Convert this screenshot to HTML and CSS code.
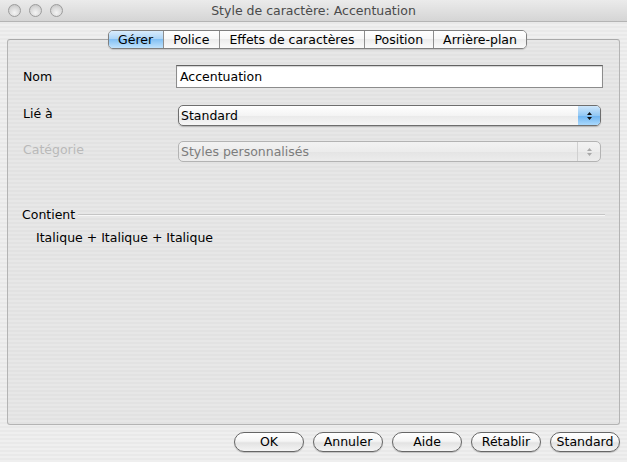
FILE: index.html
```html
<html>
<head>
  <title>Style de caractère: Accentuation</title>
  <meta charset="UTF-8">
  <link rel="stylesheet" href="styles.css">
</head>
<body>
<div class="window">
  <div class="titlebar">
    <div class="lights">
      <span class="light"></span>
      <span class="light"></span>
      <span class="light"></span>
    </div>
    <div class="title">Style de caractère: Accentuation</div>
    <div></div>
  </div>

  <div class="content">
    <div class="tabview">
      <div class="tabs">
        <span class="tab active">Gérer</span>
        <span class="tab">Police</span>
        <span class="tab">Effets de caractères</span>
        <span class="tab">Position</span>
        <span class="tab">Arrière-plan</span>
      </div>
      <div class="panel">
        <div class="row row-name">
          <div class="label">Nom</div>
          <div class="textfield">Accentuation</div>
        </div>
        <div class="row row-link">
          <div class="label label-up">Lié à</div>
          <div class="popup">
            <span class="popup-text">Standard</span>
            <span class="popup-arrows">
              <svg width="9" height="12" viewBox="0 0 9 12"><path d="M4.5 2 L7 5 L2 5 Z M2 7 L7 7 L4.5 10 Z" fill="#111"/></svg>
            </span>
          </div>
        </div>
        <div class="row row-cat">
          <div class="label label-up disabled">Catégorie</div>
          <div class="popup popup-disabled">
            <span class="popup-text">Styles personnalisés</span>
            <span class="popup-arrows">
              <svg width="9" height="12" viewBox="0 0 9 12"><path d="M4.5 2 L7 5 L2 5 Z M2 7 L7 7 L4.5 10 Z" fill="#a8a8a8"/></svg>
            </span>
          </div>
        </div>

        <div class="group-head">
          <span>Contient</span>
          <span class="group-line"></span>
        </div>
        <div class="group-text">Italique + Italique + Italique</div>
      </div>
    </div>

    <div class="buttons">
      <span class="button">OK</span>
      <span class="button">Annuler</span>
      <span class="button">Aide</span>
      <span class="button">Rétablir</span>
      <span class="button">Standard</span>
    </div>
  </div>
</div>
</body>
</html>
```

FILE: styles.css
```css
body{
  margin: 0;
  font-family: "DejaVu Sans", sans-serif;
  font-size: 12.5px;
  color: #000;
}
.window{
  width: 627px;
  height: 462px;
  display: flex;
  flex-direction: column;
  overflow: hidden;
  background: repeating-linear-gradient(#efefef 0 2px, #e9e9e9 2px 4px);
}

/* title bar */
.titlebar{
  height: 21px;
  border-bottom: 1px solid #b4b4b4;
  background: linear-gradient(#ebebeb, #d5d5d5);
  display: grid;
  grid-template-columns: 1fr auto 1fr;
  align-items: center;
}
.lights{
  display: flex;
  gap: 8px;
  padding-left: 8px;
}
.light{
  width: 13px;
  height: 13px;
  box-sizing: border-box;
  border-radius: 50%;
  border: 1px solid #9c9c9c;
  background: radial-gradient(circle at 50% 70%, #f4f4f4 0, #d9d9d9 55%, #bdbdbd 100%);
}
.title{
  color: #4a4a4a;
}

/* content */
.content{
  flex: 1;
  display: flex;
  flex-direction: column;
  padding: 8px 7px 10px 7px;
}
.tabview{
  display: flex;
  flex-direction: column;
}
.tabs{
  align-self: center;
  margin-left: 8px;
  margin-bottom: -10px;
  position: relative;
  z-index: 1;
  display: flex;
  border: 1px solid #7f7f7f;
  border-radius: 5px;
  overflow: hidden;
  box-shadow: 0 1px 1px rgba(0,0,0,.15);
}
.tab{
  padding: 0 9.5px;
  line-height: 17px;
  border-left: 1px solid #8e8e8e;
  background: linear-gradient(#ffffff 0, #f7f7f7 50%, #ececec 50%, #fafafa 100%);
}
.tab:first-child{
  border-left: 0;
}
.tab.active{
  background: linear-gradient(#d9ecfc 0, #a9d3f7 50%, #84c1f4 50%, #c0e3fd 100%);
}
.panel{
  height: 386px;
  box-sizing: border-box;
  border: 1px solid #b4b4b4;
  border-top-color: #a9a9a9;
  border-radius: 3px;
  background: repeating-linear-gradient(#e7e7e7 0 2px, #e2e2e2 2px 4px);
  padding: 25px 16px 0 15px;
}

/* form rows */
.row{
  display: flex;
  align-items: center;
}
.row-link{
  margin-top: 17px;
}
.row-cat{
  margin-top: 15px;
}
.label{
  width: 153px;
}
.label-up{
  padding-bottom: 4px;
}
.disabled{
  color: #b9b9b9;
}
.textfield{
  flex: 1;
  height: 23px;
  box-sizing: border-box;
  border: 1px solid #8c8c8c;
  border-top-color: #626262;
  background: #fff;
  box-shadow: inset 0 1px 1px rgba(0,0,0,.18);
  padding-left: 3px;
  line-height: 21px;
}
.popup{
  flex: 1;
  margin: 0 2px;
  height: 21px;
  box-sizing: border-box;
  display: flex;
  border: 1px solid #6e6e6e;
  border-radius: 5px;
  overflow: hidden;
  background: linear-gradient(#ffffff 0, #f4f4f4 50%, #e9e9e9 50%, #f6f6f6 100%);
  box-shadow: 0 1px 1px rgba(0,0,0,.2);
}
.popup-text{
  flex: 1;
  padding-left: 2px;
  line-height: 19px;
}
.popup-arrows{
  width: 22px;
  display: flex;
  align-items: center;
  justify-content: center;
  background: linear-gradient(#cde6fb 0, #93c8f4 50%, #6bb2f0 50%, #aad9fd 100%);
}
.popup-disabled{
  border-color: #b3b3b3;
  box-shadow: none;
  background: linear-gradient(#f2f2f2 0, #ececec 50%, #e4e4e4 50%, #ececec 100%);
}
.popup-disabled .popup-text{
  color: #7c7c7c;
}
.popup-disabled .popup-arrows{
  border-left: 1px solid #d0d0d0;
  background: transparent;
}

/* contains box */
.group-head{
  margin-top: 45px;
  margin-left: -1px;
  margin-right: -2px;
  display: flex;
  align-items: center;
  gap: 3px;
  line-height: 16px;
}
.group-line{
  flex: 1;
  border-top: 1px solid #c5c5c5;
  border-bottom: 1px solid #f7f7f7;
}
.group-text{
  margin-top: 7px;
  padding-left: 13px;
  line-height: 16px;
}

/* buttons */
.buttons{
  display: flex;
  justify-content: flex-end;
  gap: 9px;
  margin-top: 7px;
}
.button{
  width: 70px;
  height: 20px;
  box-sizing: border-box;
  border: 1px solid #666;
  border-radius: 10px;
  text-align: center;
  line-height: 18px;
  background: linear-gradient(#ffffff 0, #f5f5f5 45%, #e3e3e3 55%, #f4f4f4 100%);
  box-shadow: 0 1px 1px rgba(0,0,0,.2);
}
```
